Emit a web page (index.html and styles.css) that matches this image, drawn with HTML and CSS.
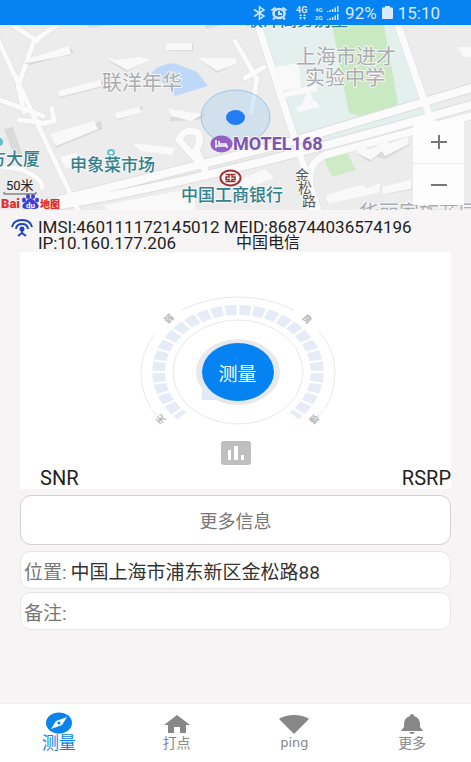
FILE: index.html
```html
<!DOCTYPE html>
<html lang="zh-CN">
<head>
<meta charset="utf-8">
<meta name="viewport" content="width=device-width, initial-scale=1">
<title>测量</title>
<link rel="stylesheet" href="styles.css">
</head>
<body>
<div class="app">
  <header class="status">
    <svg class="status-icons" width="87" height="18" viewBox="0 0 87 18" fill="none" stroke="#cfe5fb" stroke-width="1.500">
      <path d="M1 5.500L11 12 6.500 15V3L11 6 1 12.500"/>
      <ellipse cx="26" cy="9.500" rx="5.500" ry="4.500" stroke-width="2.500"/>
      <path d="M26 7V10H29M18.500 6.500l4-3M33.500 6.500l-4-3M21.500 14l-1.500 1.500M30.500 14l1.500 1.500" stroke-width="2"/>
      <g fill="#cfe5fb" stroke="none">
        <path d="M46 12h3l-1.500-2zM46 13h3l-1.500 3zM50 12h3l-1.500-2zM50 13h3l-1.500 3z"/>
        <path d="M74 7h1.500v1H74zM76.500 6H78v2h-1.500zM79 5h1.500v3H79zM81.500 3.500H83v4.500h-1.500zM84 2h1.500v6H84zM74 15h1.500v1H74zM76.500 14H78v2h-1.500zM79 13h1.500v3H79zM81.500 11.500H83V16h-1.500zM84 10h1.500v6H84z"/>
        <text x="43" y="9" class="net-big">4G</text>
        <text x="62" y="8" class="net">4G</text>
        <text x="62" y="16" class="net">2G</text>
      </g>
    </svg>
    <span>92%</span>
    <svg width="11" height="13" viewBox="0 0 11 13"><path d="M3 0h5v1.500h2q1 0 1 1V12q0 1-1 1H1q-1 0-1-1V2.500q0-1 1-1h2z" fill="#d9eafb"/></svg>
    <span>15:10</span>
  </header>

  <section class="map">
    <svg class="map-canvas" viewBox="0 25 471 185" preserveAspectRatio="xMidYMid slice">
      <rect y="25" width="471" height="185" fill="#ececec"/>
      <path d="M262 25H398L433 126 292 148Z" fill="#e3f0ed"/>
      <path d="M262 148L292 133 433 98 436 112 360 136 300 150Z" fill="#e3f0ed"/>
      <path d="M332 25H384L398 104Q378 123 349 113Z" fill="#c9e9c2"/>
      <path d="M323 157L346 150 356 170 332 177Z" fill="#cdebc7"/>
      <path d="M150 75Q157 64 174 63L197 72 208 86 175 96Q169 84 150 75Z" fill="#bed9f7"/>
      <g fill="none" stroke="#dedede" stroke-linejoin="round" stroke-linecap="round">
        <path d="M-3 38L78 210M0 100L43 116M19 120L40 122M57 25L34 41 18 86 24 112M12 25L37 41M40 124L54 121 52 108M0 166L23 170Q44 180 42 188" stroke-width="6"/>
        <path d="M60 205Q210 180 471 105M60 200L290 142 471 88" stroke-width="10"/>
        <path d="M258 25L318 210M398 25L433 126M310 210V180Q308 164 325 155L471 116M204 168Q190 152 179 140 184 127 198 133 202 140 196 150L204 168 206 176" stroke-width="8"/>
        <path d="M235 41L257 79 251 113M245 78L264 67" stroke-width="6"/>
      </g>
      <g fill="none" stroke="#fbfbfb" stroke-linejoin="round" stroke-linecap="round">
        <path d="M-3 38L78 210M0 100L43 116M19 120L40 122M57 25L34 41 18 86 24 112M12 25L37 41M40 124L54 121 52 108M0 166L23 170Q44 180 42 188" stroke-width="5"/>
        <path d="M60 205Q210 180 471 105M60 200L290 142 471 88" stroke-width="8"/>
        <path d="M258 25L318 210M398 25L433 126M310 210V180Q308 164 325 155L471 116M204 168Q190 152 179 140 184 127 198 133 202 140 196 150L204 168 206 176" stroke-width="7"/>
        <path d="M235 41L257 79 251 113M245 78L264 67" stroke-width="5"/>
      </g>
      <g fill="#dadada">
        <path d="M24 63L71 55 69 46 74 53 30 65Z"/>
        <path d="M56 148L102 129 101 121 53 139ZM4 129L13 127 22 154 14 155ZM118 120L142 111 143 106 116 118ZM60 98L103 87V81L57 96ZM170 121L199 120 207 113 170 117ZM167 51H193V43ZM106 59L126 72 150 60 128 70ZM200 60L217 73 236 64 218 70ZM90 28L108 25H86ZM206 29L222 25H205Z"/>
        <path d="M358 154L369 162 377 157 385 159 410 145 408 141 378 153ZM327 204L381 191 381 188 329 199ZM385 194L412 190V186Z"/>
      </g>
      <g fill="#f9f9f9">
        <path d="M25 60L69 46 71 54 27 63ZM58 91L100 80 102 86 59 97ZM50 134L94 121 98 129 56 146ZM166 43H192V50H166ZM105 57L116 60 140 57 150 60 127 70ZM198 58H236V64L217 71ZM115 113L139 107 142 112 117 119ZM168 109L203 114 191 121 172 116ZM132 143L175 148 172 155 141 151ZM60 157L77 153 80 163 66 169ZM275 67L299 63 301 88 277 91ZM301 106L309 88 315 105 303 109ZM280 93L317 84 317 91 282 98ZM296 107L316 101 320 107 298 112ZM355 147L366 144 367 150 378 146 374 142 386 138 389 144 407 137 409 144 385 156 382 151 371 160 359 154ZM326 196L345 189 364 185 366 189 380 183V192L328 204ZM382 187L411 180V189L383 194ZM238 181L265 169 274 178 238 192ZM25 205L36 195 47 210H25ZM103 205L195 188V210H108ZM458 47H471V57H463Z"/>
      </g>
      <ellipse cx="235.500" cy="117" rx="34.500" ry="27" fill="#b4d4ef" fill-opacity=".48" stroke="#9fc4e3"/>
      <ellipse cx="235.500" cy="117.500" rx="9.500" ry="7.500" fill="#217cf5"/>
      <ellipse cx="111" cy="152.500" rx="3" ry="2.500" fill="#fff" stroke="#62bfd0" stroke-width="2"/>
      <circle cx="-1" cy="142" r="4" fill="#62bfd0"/>
      <g class="places">
        <text x="246" y="26" class="label teal">联洋高务别墅</text>
        <text x="102" y="90" class="area">联洋年华</text>
        <text x="296" y="64" class="area">上海市进才</text>
        <text x="305" y="85" class="area">实验中学</text>
        <text x="-11" y="165" class="label teal">方大厦</text>
        <text x="70" y="171" class="label teal">申象菜市场</text>
        <text x="181" y="201" class="label teal">中国工商银行</text>
        <text x="233" y="150" class="label purple">MOTEL168</text>
        <text x="295" y="180" class="road">金</text>
        <text x="298" y="193" class="road">松</text>
        <text x="302" y="206" class="road">路</text>
        <text x="359" y="220" class="area">华丽家族花园</text>
      </g>
      <ellipse cx="221.500" cy="144" rx="11" ry="8.500" fill="#9361c6"/>
      <path d="M216 140V148M216 146H227V148M218 144H226V146" fill="none" stroke="#fff" stroke-width="1.500"/>
      <circle cx="219" cy="142" r="1" fill="#fff"/>
      <ellipse cx="230.500" cy="178" rx="10" ry="7.500" fill="#fff" stroke="#9c3032" stroke-width="2"/>
      <path d="M225.500 174.500H235.500M225.500 181.500H235.500M229 174.500V177H226V179.500H229V181.500M232 174.500V177H235V179.500H232V181.500" fill="none" stroke="#9c3032" stroke-width="1.500"/>
      <text x="6" y="190" class="scale">50米</text>
      <path d="M4 192V194H36V192" fill="none" stroke="#555"/>
      <text x="1" y="208" class="baidu">Bai</text>
      <g fill="#3b3fd8">
        <ellipse cx="24" cy="200" rx="2" ry="2.500"/><ellipse cx="28" cy="196.500" rx="2" ry="2.500"/><ellipse cx="33" cy="196.500" rx="2" ry="2.500"/><ellipse cx="37" cy="200" rx="2" ry="2.500"/>
        <path d="M30.500 198Q34 199 36 202.500 40 205 38 208 35 209.500 30.500 208.500 26 209.500 23 208 21 205 25 202.500 27 199 30.500 198Z"/>
      </g>
      <text x="26" y="208" class="du">du</text>
      <text x="40" y="208" class="ditu">地图</text>
    </svg>
    <div class="zoom">
      <button type="button" aria-label="放大"><svg width="18" height="14" viewBox="0 0 18 14"><path d="M1 7H17M9 0V14" stroke="#777" stroke-width="2"/></svg></button>
      <button type="button" aria-label="缩小"><svg width="18" height="14" viewBox="0 0 18 14"><path d="M1 7H17" stroke="#777" stroke-width="2"/></svg></button>
    </div>
  </section>

  <section class="device">
    <svg width="24" height="18" viewBox="0 0 24 18" fill="none" stroke="#1f45c4" stroke-width="2">
      <path d="M2 8Q3.500 1 12 1T22 8M6 10Q6.500 5 12 5T18 10M12 9V15M8 17L12 14 16 17"/><circle cx="12" cy="10" r="1.500" fill="#1f45c4"/>
    </svg>
    <div class="ids">
      <div>IMSI:460111172145012 MEID:868744036574196</div>
      <div class="ip-row"><span>IP:10.160.177.206</span><span class="carrier">中国电信</span></div>
    </div>
  </section>

  <main>
    <section class="panel">
      <div class="gauge">
        <svg class="dial" width="204" height="136" viewBox="-102 -80 204 136" fill="none">
          <path d="M-83 -38Q-97 -20 -97 0 -97 28 -79 46M-56 -62Q-30 -75 0 -75T56 -62M81 -41Q97 -22 97 0 97 28 79 46" stroke="#e9e9ed"/>
          <ellipse rx="65" ry="52" stroke="#e9e9ed"/>
          <g transform="scale(1.28 1)" stroke="#e6ecf7" stroke-width="10">
            <path d="M0 -62A62 62 0 0 1 43.840 43.840" pathLength="135" stroke-dasharray="0 1 8 1"/>
            <path d="M0 -62A62 62 0 0 0 -43.840 43.840" pathLength="135" stroke-dasharray="0 1 8 1"/>
          </g>
          <ellipse rx="42" ry="33" fill="#e9e9ed"/>
          <path d="M-36 12H-15V28H-36Z" fill="#e1eaf8"/>
          <g class="marks">
            <text transform="translate(-69 -53) rotate(-45)" y="3">弱</text>
            <text transform="translate(69 -53) rotate(45)" y="3">良</text>
            <text transform="translate(-77 47) rotate(-135)" y="3">无</text>
            <text transform="translate(76 47) rotate(135)" y="3">强</text>
          </g>
        </svg>
        <button class="measure" type="button">测量</button>
      </div>
      <svg class="chart" width="30" height="24" viewBox="0 0 30 24"><rect width="30" height="24" rx="3" fill="#bfbfbf"/><path d="M7 9H10V19H7ZM13 5H17V19H13ZM20 14H23V19H20Z" fill="#fff"/></svg>
      <div class="metrics"><span>SNR</span><span>RSRP</span></div>
    </section>

    <button class="more" type="button">更多信息</button>
    <div class="field"><label for="place">位置:</label><input id="place" value="中国上海市浦东新区金松路88"></div>
    <div class="field"><label for="note">备注:</label><input id="note"></div>
  </main>

  <nav class="tabs">
    <a href="#measure" class="active">
      <svg width="26" height="22" viewBox="0 0 26 22"><ellipse cx="13" cy="11" rx="13" ry="10.500" fill="#0984ef"/><path d="M21 5L16 13 5 17 10 9Z" fill="#fff"/><circle cx="13" cy="11" r="1.500" fill="#0984ef"/></svg>
      <span>测量</span></a>
    <a href="#dot">
      <svg width="26" height="22" viewBox="0 0 26 22"><path d="M13 3L26 13H22V21H16V15H10V21H4V13H0Z" fill="#878787"/></svg>
      <span>打点</span></a>
    <a href="#ping" class="latin">
      <svg width="30" height="22" viewBox="0 0 30 22"><path d="M0 7Q6 3 15 3T30 7L15 22Z" fill="#878787"/></svg>
      <span>ping</span></a>
    <a href="#more">
      <svg width="22" height="22" viewBox="0 0 22 22"><path d="M9 4Q9 2 11 2T13 4Q19 6 19 12V15L22 19H0L3 15V12Q3 6 9 4ZM8 20H14Q13 22 11 22T8 20Z" fill="#878787"/></svg>
      <span>更多</span></a>
  </nav>
</div>
</body>
</html>
```
FILE: styles.css
```css
* { box-sizing: border-box; }
body {
  margin: 0;
  background: #f6f4f5;
  color: #222;
  font-family: Roboto, "Noto Sans CJK SC", sans-serif;
}
button, input { font: inherit; }
button { padding: 0; border: 0; cursor: pointer; }
svg { display: block; }

.app { display: flex; flex-direction: column; min-height: 100vh; }

.status {
  display: flex;
  align-items: center;
  justify-content: flex-end;
  gap: 5px;
  height: 25px;
  padding-right: 31px;
  background: #0583f2;
  color: #d9eafb;
  font-size: 17px;
}
.net-big { font-size: 9px; font-weight: 700; }
.net { font-size: 6px; font-weight: 700; }

.map { position: relative; height: 185px; overflow: hidden; }
.map-canvas { width: 100%; height: 100%; }
.places text { paint-order: stroke; stroke: #f6f6f6; stroke-width: 2px; }
.area { font-size: 20px; fill: #a9adb1; }
.label { font-size: 17px; }
.teal { fill: #34808c; font-weight: 500; }
.purple { font-size: 18px; font-weight: 700; fill: #7d54b0; }
.road { font-size: 14px; fill: #55595e; }
.scale { font-size: 13px; fill: #222; }
.baidu { font-size: 13px; font-weight: 900; fill: #e02e2c; }
.du { font-size: 8px; font-weight: 700; fill: #fff; }
.ditu { font-size: 10px; font-weight: 900; fill: #e02e2c; }
.zoom {
  position: absolute;
  right: 7px;
  bottom: 5px;
  display: grid;
  width: 51px;
  background: #fff;
}
.zoom button {
  display: grid;
  place-items: center;
  height: 42px;
  background: #fdfdfd;
}
.zoom button + button { border-top: 1px solid #e8e8e8; }

.device {
  display: flex;
  gap: 4px;
  height: 42px;
  padding: 9px 10px 0;
  font-size: 17px;
  line-height: 16px;
}
.ids { white-space: nowrap; }
.ip-row { display: flex; gap: 60px; }
.carrier { font-size: 16px; }

main {
  flex: 1;
  display: flex;
  flex-direction: column;
  padding: 0 20px;
}
.panel { background: #fff; padding-top: 40px; }
.gauge { display: grid; place-items: center; padding-left: 4px; }
.gauge > * { grid-area: 1 / 1; }
.marks { font-size: 9px; font-weight: 700; fill: #b5b5b5; text-anchor: middle; }
.measure {
  width: 72px;
  height: 58px;
  margin-top: 24px;
  border-radius: 50%;
  background: #0583f2;
  color: #fff;
  font-size: 19px;
}
.chart { margin: 13px auto 0; }
.metrics {
  display: flex;
  justify-content: space-between;
  margin-top: 3px;
  padding-left: 20px;
  font-size: 20px;
  line-height: 21px;
}
.more {
  height: 50px;
  margin: 6px 0;
  border: 1px solid #d2d2d2;
  border-radius: 11px;
  background: #fff;
  color: #777;
  font-size: 18px;
}
.field {
  display: flex;
  align-items: center;
  gap: 4px;
  height: 38px;
  margin-bottom: 3px;
  padding: 0 3px;
  border: 1px solid #e8e6e7;
  border-radius: 11px;
  background: #fff;
  font-size: 19px;
}
.field label { color: #777; }
.field input {
  flex: 1;
  min-width: 0;
  padding: 0;
  border: 0;
  outline: 0;
  background: none;
  color: #333;
}

.tabs {
  display: grid;
  grid-template-columns: repeat(4, 1fr);
  height: 59px;
  border-top: 1px solid #eeecee;
  background: #fff;
}
.tabs a {
  display: flex;
  flex-direction: column;
  align-items: center;
  padding-top: 8px;
  color: #878787;
  font-size: 14px;
  line-height: 18px;
  text-decoration: none;
}
.tabs .active { color: #0984ef; font-size: 17px; }
.tabs .latin { font-family: "DejaVu Sans", sans-serif; font-size: 13px; }
```
